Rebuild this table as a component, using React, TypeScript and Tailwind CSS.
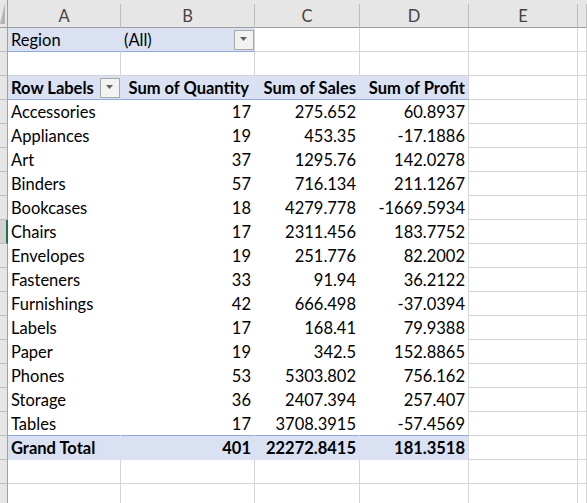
import * as React from 'react';

const GRID = 'grid grid-cols-[8px_113px_134px_105px_109px_109px_1fr]';
const FONT = { fontFamily: 'Lato, "Open Sans", "Liberation Sans", sans-serif' };

type Row = [string, string, string, string];

const rows: Row[] = [
  ['Accessories', '17', '275.652', '60.8937'],
  ['Appliances', '19', '453.35', '-17.1886'],
  ['Art', '37', '1295.76', '142.0278'],
  ['Binders', '57', '716.134', '211.1267'],
  ['Bookcases', '18', '4279.778', '-1669.5934'],
  ['Chairs', '17', '2311.456', '183.7752'],
  ['Envelopes', '19', '251.776', '82.2002'],
  ['Fasteners', '33', '91.94', '36.2122'],
  ['Furnishings', '42', '666.498', '-37.0394'],
  ['Labels', '17', '168.41', '79.9388'],
  ['Paper', '19', '342.5', '152.8865'],
  ['Phones', '53', '5303.802', '756.162'],
  ['Storage', '36', '2407.394', '257.407'],
  ['Tables', '17', '3708.3915', '-57.4569'],
];

// small filter button like the pivot dropdown
function DropButton() {
  return (
    <div className="-mt-[2px] flex h-[20px] w-[20px] shrink-0 items-center justify-center border border-[#a6a6a6] bg-[#f2f2f2]">
      <svg width="8" height="5" viewBox="0 0 8 5">
        <path d="M0 0 H7 L3.5 4 Z" fill="#606060" />
      </svg>
    </div>
  );
}

function Gutter({ active }: { active?: boolean }) {
  return (
    <div
      className={
        active
          ? 'h-[24px] border-b border-r-2 border-b-[#bdbdbd] border-r-[#217346] bg-[#d2d2d2]'
          : 'h-[24px] border-b border-r border-b-[#bdbdbd] border-r-[#9e9e9e] bg-[#e6e6e6]'
      }
    />
  );
}

function Blank() {
  return <div className="h-[24px] border-b border-r border-[#d4d4d4]" />;
}

function Tail() {
  return (
    <>
      <Blank />
      <Blank />
    </>
  );
}

export default function App() {
  return (
    <div className="h-[503px] w-[587px] overflow-hidden bg-white text-[16.5px] text-black" style={FONT}>
      {/* column letters */}
      <div className={`${GRID} h-[28px] border-b border-[#9e9e9e] bg-[#e6e6e6] text-[16.5px] text-[#444]`}>
        <div className="relative border-r border-[#9e9e9e]">
          <div className="absolute left-0 top-[3px] h-[21px] w-[5px] bg-[#b4b4b4] [clip-path:polygon(100%_0,100%_100%,0_100%)]" />
        </div>
        {['A', 'B', 'C', 'D', 'E', ''].map((c, i) => (
          <div key={i} className="mt-[4px] flex items-center justify-center border-r border-[#bdbdbd] pb-[3px]">
            {c}
          </div>
        ))}
      </div>

      {/* Region filter row */}
      <div className={GRID}>
        <Gutter />
        <div className="flex h-[24px] items-center border-b border-r border-b-[#8ea9db] border-r-[#d9e1f2] bg-[#d9e1f2] pl-[3px] pt-[2px]">
          Region
        </div>
        <div className="flex h-[24px] items-center justify-between border-b border-r border-b-[#8ea9db] border-r-[#d4d4d4] bg-[#d9e1f2] pl-[3px] pt-[2px]">
          <span>(All)</span>
          <DropButton />
        </div>
        <Blank />
        <Blank />
        <Tail />
      </div>

      {/* empty row */}
      <div className={GRID}>
        <Gutter />
        <Blank />
        <Blank />
        <Blank />
        <Blank />
        <Tail />
      </div>

      {/* pivot header */}
      <div className={`${GRID} font-bold`}>
        <Gutter />
        <div className="flex h-[24px] items-center justify-between border-b border-r border-b-[#8ea9db] border-r-[#d9e1f2] bg-[#d9e1f2] pl-[3px] pt-[2px]">
          <span>Row Labels</span>
          <DropButton />
        </div>
        <div className="flex h-[24px] items-center justify-end whitespace-nowrap border-b border-r border-b-[#8ea9db] border-r-[#d9e1f2] bg-[#d9e1f2] pr-[5px] pt-[2px]">
          Sum of Quantity
        </div>
        <div className="flex h-[24px] items-center justify-end whitespace-nowrap border-b border-r border-b-[#8ea9db] border-r-[#d9e1f2] bg-[#d9e1f2] pr-[3px] pt-[2px]">
          Sum of Sales
        </div>
        <div className="flex h-[24px] items-center justify-end whitespace-nowrap border-b border-r border-b-[#8ea9db] border-r-[#d4d4d4] bg-[#d9e1f2] pr-[3px] pt-[2px]">
          Sum of Profit
        </div>
        <Tail />
      </div>

      {rows.map((r, idx) => {
        const last = idx === rows.length - 1;
        const bottom = last ? 'border-b-[#8ea9db]' : 'border-b-white';
        return (
          <div key={r[0]} className={GRID}>
            <Gutter active={r[0] === 'Chairs'} />
            <div className={`flex h-[24px] items-center border-b border-r border-r-white pl-[3px] pt-[2px] ${bottom}`}>{r[0]}</div>
            <div className={`flex h-[24px] items-center justify-end border-b border-r border-r-white pr-[3px] pt-[2px] ${bottom}`}>{r[1]}</div>
            <div className={`flex h-[24px] items-center justify-end border-b border-r border-r-white pr-[3px] pt-[2px] ${bottom}`}>{r[2]}</div>
            <div className={`flex h-[24px] items-center justify-end border-b border-r border-r-[#d4d4d4] pr-[3px] pt-[2px] ${bottom}`}>{r[3]}</div>
            <Tail />
          </div>
        );
      })}

      {/* grand total */}
      <div className={`${GRID} font-bold`}>
        <Gutter />
        <div className="flex h-[24px] items-center border-b border-r border-[#d9e1f2] bg-[#d9e1f2] pl-[3px] pt-[2px]">Grand Total</div>
        <div className="flex h-[24px] items-center justify-end border-b border-r border-[#d9e1f2] bg-[#d9e1f2] pr-[3px] pt-[2px]">401</div>
        <div className="flex h-[24px] items-center justify-end border-b border-r border-[#d9e1f2] bg-[#d9e1f2] pr-[3px] pt-[2px]">22272.8415</div>
        <div className="flex h-[24px] items-center justify-end border-b border-r border-b-[#d9e1f2] border-r-[#d4d4d4] bg-[#d9e1f2] pr-[3px] pt-[2px]">181.3518</div>
        <Tail />
      </div>

      {[0, 1].map((k) => (
        <div key={k} className={GRID}>
          <Gutter />
          <Blank />
          <Blank />
          <Blank />
          <Blank />
          <Tail />
        </div>
      ))}
    </div>
  );
}
